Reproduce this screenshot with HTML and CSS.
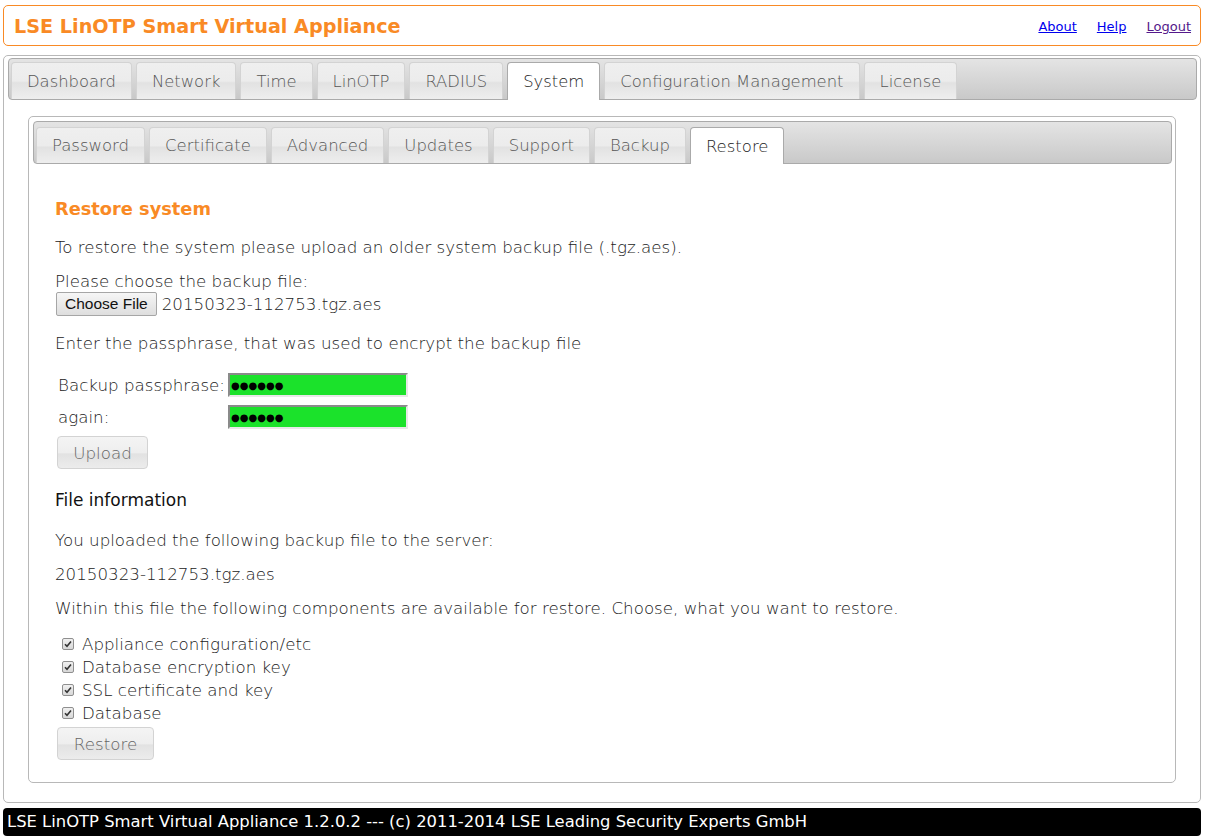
FILE: index.html
```html
<!DOCTYPE html>
<html>
<head>
<meta charset="utf-8">
<link rel="stylesheet" href="styles.css">
</head>
<body>
<div class="header">
  <div class="brand">LSE LinOTP Smart Virtual Appliance</div>
  <div class="links">
    <a href="#" class="lnk">About</a>
    <a href="#" class="lnk">Help</a>
    <a href="#" class="lnk visited">Logout</a>
  </div>
</div>

<div class="tabs main">
  <ul class="nav">
    <li class="tab">Dashboard</li>
    <li class="tab">Network</li>
    <li class="tab">Time</li>
    <li class="tab">LinOTP</li>
    <li class="tab">RADIUS</li>
    <li class="tab active">System</li>
    <li class="tab">Configuration Management</li>
    <li class="tab">License</li>
  </ul>
  <div class="panel">
    <div class="tabs sub">
      <ul class="nav">
        <li class="tab">Password</li>
        <li class="tab">Certificate</li>
        <li class="tab">Advanced</li>
        <li class="tab">Updates</li>
        <li class="tab">Support</li>
        <li class="tab">Backup</li>
        <li class="tab active">Restore</li>
      </ul>
      <div class="content">
        <h2 class="title">Restore system</h2>
        <p class="line">To restore the system please upload an older system backup file (.tgz.aes).</p>
        <div class="choose">
          <div>Please choose the backup file:</div>
          <div class="filerow"><span class="filebtn">Choose File</span><span class="fname">20150323-112753.tgz.aes</span></div>
        </div>
        <p class="line enter">Enter the passphrase, that was used to encrypt the backup file</p>
        <div class="passgrid">
          <label>Backup passphrase:</label><input type="text" class="pw" value="●●●●●●" readonly>
          <label>again:</label><input type="text" class="pw" value="●●●●●●" readonly>
        </div>
        <div class="btn upload">Upload</div>
        <h3 class="sub-title">File information</h3>
        <p class="line">You uploaded the following backup file to the server:</p>
        <p class="line">20150323-112753.tgz.aes</p>
        <p class="line">Within this file the following components are available for restore. Choose, what you want to restore.</p>
        <ul class="checks">
          <li><span class="cb"><svg width="8" height="8" viewBox="0 0 8 8"><path d="M1 4.2 L3 6.3 L7 1.5" fill="none" stroke="#333" stroke-width="1.6"/></svg></span>Appliance configuration/etc</li>
          <li><span class="cb"><svg width="8" height="8" viewBox="0 0 8 8"><path d="M1 4.2 L3 6.3 L7 1.5" fill="none" stroke="#333" stroke-width="1.6"/></svg></span>Database encryption key</li>
          <li><span class="cb"><svg width="8" height="8" viewBox="0 0 8 8"><path d="M1 4.2 L3 6.3 L7 1.5" fill="none" stroke="#333" stroke-width="1.6"/></svg></span>SSL certificate and key</li>
          <li><span class="cb"><svg width="8" height="8" viewBox="0 0 8 8"><path d="M1 4.2 L3 6.3 L7 1.5" fill="none" stroke="#333" stroke-width="1.6"/></svg></span>Database</li>
        </ul>
        <div class="btn restore">Restore</div>
      </div>
    </div>
  </div>
</div>

<div class="footer">LSE LinOTP Smart Virtual Appliance 1.2.0.2 --- (c) 2011-2014 LSE Leading Security Experts GmbH</div>
</body>
</html>
```
FILE: styles.css
```css
* { box-sizing: border-box; }
body {
  margin: 0;
  padding: 5px 6px 0 3px;
  font-family: "DejaVu Sans", Verdana, sans-serif;
  font-weight: 200;
  font-size: 16.7px;
  color: #222;
  background: #fff;
}
.header {
  height: 41px;
  border: 1px solid #f98a25;
  border-radius: 5px;
  display: flex;
  align-items: center;
  justify-content: space-between;
  padding: 0 9px 0 10px;
}
.brand {
  color: #f98a25;
  font-weight: bold;
  font-size: 19.2px;
  padding-top: 1px;
}
.links {
  display: flex;
  gap: 20px;
  font-size: 13px;
  font-weight: 400;
  padding-top: 2px;
}
.lnk { color: #0000ee; }
.lnk.visited { color: #551a8b; }

.tabs {
  border: 1px solid #b8b8b8;
  border-radius: 5px;
}
.tabs.main {
  margin-top: 9px;
  height: 748px;
  padding: 2px 3px 0 4px;
}
.nav {
  list-style: none;
  margin: 0;
  display: flex;
  gap: 4px;
  border: 1px solid #aaa;
  border-radius: 4px;
  background: linear-gradient(#e4e4e4, #c9c9c9);
  padding: 3px 2px 0 2px;
}
.tab {
  border: 1px solid #d3d3d3;
  border-bottom: none;
  border-radius: 4px 4px 0 0;
  background: linear-gradient(#efefef 0%, #ececec 50%, #e2e2e2 55%, #eeeeee 100%);
  color: #555;
  height: 37px;
  padding: 0 15px;
  display: flex;
  align-items: center;
  font-size: 16.4px;
}
.tab.active {
  background: #fff;
  color: #212121;
  border-color: #aaa;
  height: 38px;
  margin-bottom: -1px;
}
.panel {
  padding: 16px 21px 0 20px;
}
.tabs.sub {
  height: 667px;
  padding: 4px 3px 0 4px;
}
.tabs.sub .nav {
  padding-top: 5px;
}
.tabs.sub .tab { height: 36px; font-size: 16.5px; }
.tabs.sub .tab.active { height: 37px; }
.content {
  padding: 32px 0 0 22px;
}
.title {
  margin: 0 0 14px 0;
  color: #f98a25;
  font-size: 17.8px;
  font-weight: bold;
  line-height: 26px;
}
.line {
  margin: 0;
  line-height: 22px;
}
.content .line { margin-bottom: 12px; }
.choose {
  line-height: 22px;
}
.filerow {
  display: flex;
  align-items: center;
  height: 24px;
}
.filebtn {
  font-family: "Liberation Sans", Arial, sans-serif;
  font-weight: 400;
  font-size: 15.5px;
  color: #111;
  border: 1px solid #a6a6a6;
  border-radius: 2px;
  background: linear-gradient(#f6f6f6, #dedede);
  height: 24px;
  padding: 0 8px;
  display: flex;
  align-items: center;
  margin-left: 1px;
  margin-right: 5px;
}
.content .line.enter { margin-top: 16px; margin-bottom: 19px; }
.passgrid {
  display: grid;
  grid-template-columns: 170px 180px;
  row-gap: 8px;
  align-items: center;
  padding-left: 3px;
}
.pw {
  height: 24px;
  width: 180px;
  background: #1be22b;
  border: 2px solid #1be22b;
  border-top-color: #8a8a8a;
  border-left-color: #8a8a8a;
  border-right-color: #e8e8e8;
  border-bottom-color: #e8e8e8;
  padding: 0 1px;
  font-family: "DejaVu Sans", sans-serif;
  font-weight: 400;
  font-size: 10px;
  color: #000;
  outline: none;
  letter-spacing: 0;
}
.btn {
  display: inline-flex;
  align-items: center;
  justify-content: center;
  height: 33px;
  border: 1px solid #d3d3d3;
  border-radius: 4px;
  background: linear-gradient(#f4f4f4 0%, #eeeeee 50%, #e2e2e2 55%, #ececec 100%);
  color: #666;
  margin-left: 2px;
}
.btn.upload { width: 91px; margin-top: 7px; }
.sub-title {
  margin: 18px 0 16px 0;
  font-size: 17px;
  font-weight: 400;
  color: #111;
  line-height: 26px;
}
.checks {
  list-style: none;
  margin: 13px 0 0 0;
  padding: 0 0 0 7px;
}
.checks li {
  height: 23px;
  display: flex;
  align-items: center;
}
.cb {
  width: 12px;
  height: 12px;
  border: 1px solid #8f8f8f;
  border-radius: 2px;
  background: linear-gradient(#f0f0f0, #d8d8d8);
  display: inline-flex;
  align-items: center;
  justify-content: center;
  margin-right: 8px;
}
.btn.restore { width: 97px; margin-top: 3px; }

.footer {
  margin-top: 5px;
  height: 28px;
  background: #000;
  color: #fff;
  border-radius: 4px;
  padding: 2px 4px;
  line-height: 24px;
  font-weight: 400;
  font-size: 16.4px;
}
```
